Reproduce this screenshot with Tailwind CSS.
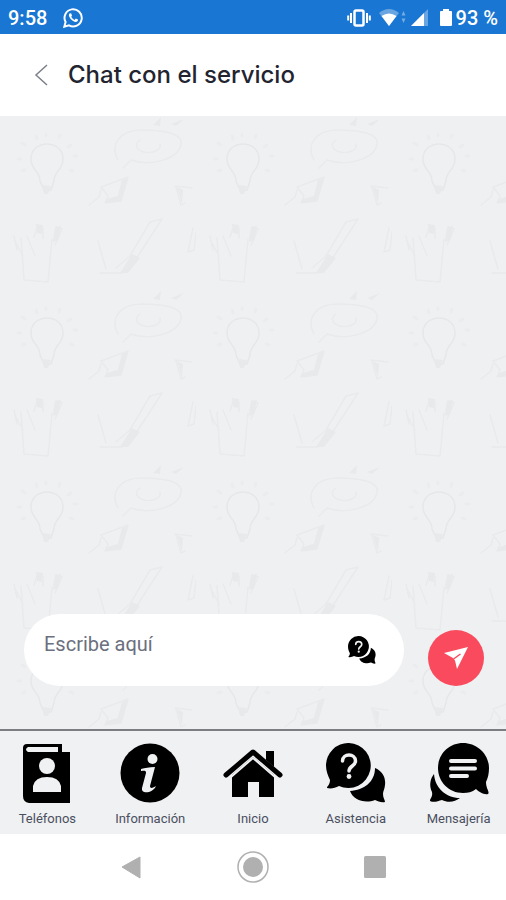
<!DOCTYPE html>
<html lang="es">
<head>
<meta charset="utf-8">
<meta name="viewport" content="width=device-width, initial-scale=1">
<title>Chat con el servicio</title>
<script src="https://cdn.jsdelivr.net/npm/@tailwindcss/browser@4"></script>
</head>
<body class="flex min-h-screen flex-col bg-white font-['Roboto',sans-serif]">
<svg class="hidden" aria-hidden="true">
  <symbol id="ask" viewBox="0 0 60 60">
    <path d="M49 25c7 3 11 9 10 17-.3 4-2 6-2 9 0 4 2 6 2 8-4 1-7-1-10-2-10 4-22 0-25-9 14-1 25-9 25-23Z"/>
    <path d="M23 0a22.500 22.500 0 1 1-10 43C9 45 5 46 1 45c0-2 3-3 3-8C2 33 0 28 0 22.500A22.500 22.500 0 0 1 23 0Z"/>
    <path d="M16.500 18c0-8 13-8 13 0 0 5-6.500 5-6.500 10" fill="none" stroke="#f0f1f3" stroke-width="3.500" stroke-linecap="round"/>
    <circle cx="23" cy="33.500" r="2.400" fill="#f0f1f3"/>
  </symbol>
</svg>

<div class="flex h-[34px] items-center justify-between bg-[#1976d2] px-2 pt-0.5 text-xl font-medium text-white">
  <div class="flex items-center gap-4">
    <span>9:58</span>
    <svg class="size-5" viewBox="0 0 20 20" fill="none" stroke="#fff" stroke-width="2"><path d="M1.300 18.700 2.600 14A8.600 8.600 0 1 1 6 17.400Z"/><path d="M6.500 5.500c-1 1-.8 3 1 5.200 2.200 2.600 5 4 6.700 2.800 1-.7.900-1.600.7-1.900l-2.100-1-1.300 1.300c-1.500-.6-2.700-1.900-3.200-3.100L9 7.500l-.9-2.200Z" fill="#fff" stroke="none"/></svg>
  </div>
  <div class="flex items-center">
    <svg class="mr-2 h-5 w-6" viewBox="0 0 24 20" fill="none" stroke="#fff" stroke-width="2"><rect x="7.500" y="2.500" width="9" height="15" rx="1.500" stroke-width="2.500"/><path d="M4 5v10M20 5v10M1.200 7.500v5M22.800 7.500v5"/></svg>
    <svg class="mr-1 h-5 w-[28px]" viewBox="0 0 28 20" fill="#fff"><path d="M0 5Q10-3 20 5L10 18Z" opacity=".35"/><path d="M2.500 8q7.500-5 15 0L10 18Z"/><path d="m24.500 3 2 4.500h-4ZM24.500 15l2-4.500h-4Z" opacity=".4"/></svg>
    <svg class="mr-3 h-5 w-[17px]" viewBox="0 0 17 20" fill="#fff"><path d="M0 18 17 1v17Z" opacity=".35"/><path d="M0 18 13 5v13Z"/></svg>
    <svg class="mr-1 h-5 w-3" viewBox="0 0 12 20" fill="#fff"><path d="M3 1h6v2h2q1 0 1 1v13q0 1-1 1H1q-1 0-1-1V4q0-1 1-1h2Z"/></svg>
    <span>93 %</span>
  </div>
</div>

<header class="flex h-[82px] items-center gap-5 bg-white px-[34px]">
  <button aria-label="Volver"><svg class="h-6 w-[14px]" viewBox="0 0 14 24" fill="none" stroke="#7c808b" stroke-width="1.500"><path d="M13 2 2 12l11 10"/></svg></button>
  <h1 class="font-['Inter',sans-serif] text-2xl font-medium text-[#22242f]">Chat con el servicio</h1>
</header>

<main class="relative isolate flex flex-1 flex-col justify-end bg-[#eff0f2]">
  <svg class="absolute inset-0 -z-10 size-full" aria-hidden="true">
    <defs>
      <pattern id="doodles" width="196" height="174" patternUnits="userSpaceOnUse">
        <g fill="none" stroke="#e9eaec" stroke-width="1.500" stroke-linecap="round" stroke-linejoin="round">
          <path d="M40 65c0-10-9-11-9-22 0-20 32-20 32 0 0 11-9 12-9 22l-3 9h-7Z" stroke="#e6e7e9"/>
          <path d="M36 20l1 3M46 18v2M60 19l-1 3M22 27l3 2M71 29l-3 2M74 40h3M70 54l3 1M18 43h3M22 55l3-1" stroke-width="3" stroke="#ebecee"/>
          <path d="M118 44c-8-14 0-30 24-30 20 0 42 3 39 15-3 14-30 22-50 15l-8 8M140 24c-6 4-4 10 4 12s18-2 16-8"/>
          <path d="m101 71 27-10-7 24-16 2 3-7Z"/>
          <path d="m101 74-2 7-10 8M175 70l17 2M176 71l5 18 4-2"/>
          <path d="m21 122 3 42 24 2 4-43M15 125l8 15M14 120l3 14M27 120l8 20M34 121l3-9h6v10M54 121l2-10 6 2-7 16"/>
          <path d="m98 125 8 28M100 157h22l14-14 26-40-12 3-20 34-14 12"/>
          <path d="m193 112-5 24 6-2 2-18"/>
        </g>
        <path d="m42 69 9 1-3 8h-4ZM107 83l10-3 3 5-15 2ZM122 64l6-2-7 23-4-2ZM36 108l7 1-1 9-5-1ZM55 111l6-1-3 14-5 2ZM153 9l8-8-1 9ZM171 8l13-5-8 7ZM177 71l6 3-1 14ZM132 138l8 4-12 15h-8Z" fill="#e8e9eb"/>
      </pattern>
    </defs>
    <rect width="100%" height="100%" fill="url(#doodles)"/>
  </svg>
  <form class="flex items-center gap-6 px-6 pt-6 pb-[43px]">
    <div class="flex h-[72px] min-w-0 flex-1 items-center rounded-full bg-white pr-7 pl-5">
      <input aria-label="Escribe aquí" placeholder="Escribe aquí" class="mb-3 min-w-0 flex-1 text-xl text-[#3b4055] outline-none placeholder:text-[#6b6f7e]">
      <button type="button" aria-label="Asistencia"><svg class="size-7"><use href="#ask"/></svg></button>
    </div>
    <button aria-label="Enviar" class="mt-4 mr-[-2px] flex size-14 items-center justify-center rounded-full bg-[#f94b5d]"><svg class="size-6" viewBox="0 0 24 24" fill="#fff"><path d="M24 1 13 23 11 14.500 9 12 0 7Z"/><path d="m9.500 13 7-5" stroke="#f94b5d" stroke-width="1.500"/></svg></button>
  </form>
</main>

<nav class="overflow-x-clip border-t-2 border-[#7b7d80] bg-[#f0f1f3] pt-3 pb-[7px] text-[13px] leading-4 text-[#4a4f60] shadow-[0_1px_0_#e9eaec]">
  <div class="-mx-1 grid grid-cols-5">
    <a href="#" class="flex flex-col items-center gap-2"><svg class="size-[60px]" viewBox="0 0 60 60"><path d="M10 1h35v8h8v51H12q-6-1-6-7V5q0-4 4-4Z"/><path d="M11 4h30v5H11Q7 6.500 11 4ZM16 49v-6q2-9 14-9t14 9v6Z" fill="#f0f1f3"/><circle cx="30" cy="23" r="8" fill="#f0f1f3"/></svg>Teléfonos</a>
    <a href="#" class="flex flex-col items-center gap-2"><svg class="size-[60px]" viewBox="0 0 60 60"><circle cx="30" cy="30" r="29.500"/><circle cx="32.500" cy="16" r="5" fill="#f0f1f3"/><path d="M21 26c4-1 8-2 14-2l-5 19c0 3 3 2 6 0-3 7-15 9-14 2l4-15c0-3-2-2-5-2Z" fill="#f0f1f3"/></svg>Información</a>
    <a href="#" class="flex flex-col items-center gap-2"><svg class="size-[60px]" viewBox="0 0 60 60"><path d="m30 14 21 18v22H36V39H25v15H9V32Z"/><path d="M43 8h8v16l-8-7Z"/><path d="M8 34 30 15l22 19" fill="none" stroke="#f0f1f3" stroke-width="2"/><path d="m3 32 27-23 27 23" fill="none" stroke="#000" stroke-width="5" stroke-linecap="round" stroke-linejoin="round"/></svg>Inicio</a>
    <a href="#" class="flex flex-col items-center gap-2"><svg class="size-[60px]"><use href="#ask"/></svg>Asistencia</a>
    <a href="#" class="flex flex-col items-center gap-2"><svg class="size-[60px]" viewBox="0 0 60 60"><path d="M5 31c1 14 12 24 26 24-5 4-12 5-18 2-4 1-8 3-12 1 0-3 3-4 2-9-3-6-2-13 2-18Z"/><path d="M34 0C20 0 9 11 9 25s11 25 25 25c5 0 9-1 13-4 3 3 8 6 12 5 2-2-2-5-2-12 2-4 3-9 3-14C60 11 48 0 34 0Z"/><path d="M22 18h24M22 25.500h24M22 33h16" stroke="#f0f1f3" stroke-width="4" stroke-linecap="round"/></svg>Mensajería</a>
  </div>
</nav>

<div class="flex h-[66px] items-center justify-center gap-[90px] bg-white">
  <button aria-label="Atrás"><svg class="size-8" viewBox="0 0 32 32"><path d="M7 16 25 6v21Z" fill="#b0b0b0" stroke="#b0b0b0" stroke-linejoin="round"/></svg></button>
  <button aria-label="Inicio"><svg class="size-8" viewBox="0 0 32 32"><circle cx="16" cy="16" r="15" fill="none" stroke="#b0b0b0" stroke-width="1.500"/><circle cx="16" cy="16" r="10" fill="#b0b0b0"/></svg></button>
  <button aria-label="Recientes"><svg class="size-8" viewBox="0 0 32 32"><rect x="5" y="5" width="22" height="22" rx="1.500" fill="#b0b0b0"/></svg></button>
</div>
</body>
</html>
